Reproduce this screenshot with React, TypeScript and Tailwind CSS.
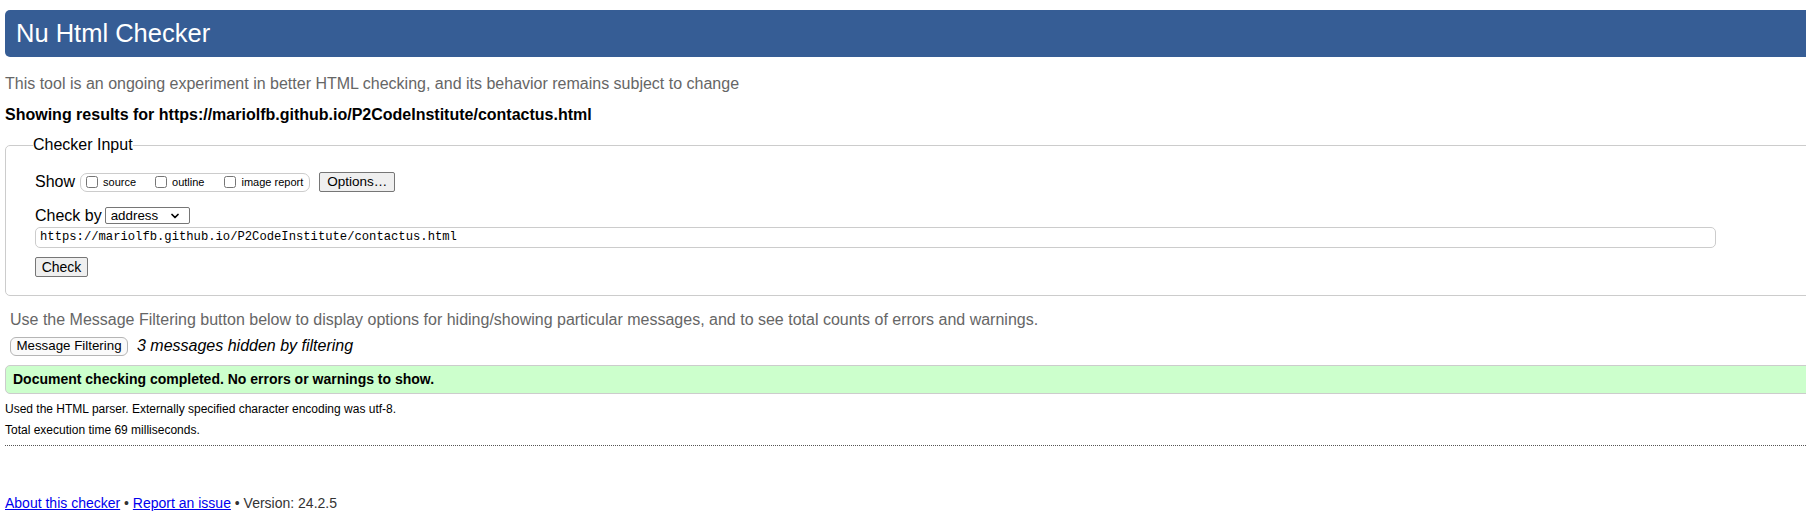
import { ChevronDown } from "lucide-react";

const urlValue = "https://mariolfb.github.io/P2CodeInstitute/contactus.html";

function ShowOptions() {
  const boxes = [
    { id: "source", label: "source", gap: "mr-[19px]" },
    { id: "outline", label: "outline", gap: "mr-[20px]" },
    { id: "image", label: "image report", gap: "mr-[6px]" },
  ];

  return (
    <div className="ml-[5px] flex h-[19px] items-center rounded-[7px] border border-[#cccccc] pl-[5px]">
      {boxes.map((box) => (
        <label key={box.id} className={`flex items-center ${box.gap}`}>
          <input type="checkbox" className="m-0 h-[12px] w-[12px]" />
          <span className="ml-[5px] text-[11px] leading-none text-black">{box.label}</span>
        </label>
      ))}
    </div>
  );
}

function App() {
  return (
    <div className="h-[518px] w-[1806px] overflow-hidden bg-white font-['Liberation_Sans',Arial,sans-serif] text-black">
      <div className="w-[1830px] pl-[5px] pt-[10px]">
        {/* page title bar */}
        <div className="flex h-[47px] items-center rounded-[5px] bg-[#365d95] pl-[11px] text-[25.5px] text-white">
          Nu Html Checker
        </div>

        <p className="mt-[17px] text-[16px] leading-[20px] text-[#666666]">
          This tool is an ongoing experiment in better HTML checking, and its behavior remains subject to change
        </p>
        <p className="mt-[11px] text-[16px] font-bold leading-[20px]">
          Showing results for {urlValue}
        </p>

        <fieldset className="mt-[10px] rounded-l-[5px] border border-[#cccccc] pb-[16px] pl-[29px]">
          <legend className="ml-[-2px] px-0 text-[16px] leading-[20px]">Checker Input</legend>

          <div className="mt-[17px] flex h-[20px] items-center">
            <span className="text-[16px] leading-none">Show</span>
            <ShowOptions />
            <button className="ml-[9px] h-[20px] w-[76px] rounded-[2px] border border-[#767676] bg-[#efefef] text-[13.5px] leading-none">
              Options…
            </button>
          </div>

          <div className="mt-[14px] flex h-[19px] items-center">
            <span className="text-[16px] leading-none">Check by</span>
            <div className="ml-[3px] flex h-[17px] w-[85px] items-center justify-between rounded-[2px] border border-[#767676] bg-white pl-[5px] pr-[8px]">
              <span className="text-[13.33px] leading-none">address</span>
              <ChevronDown size={12} strokeWidth={3.5} />
            </div>
          </div>

          <div className="mt-[2px] flex h-[21px] w-[1681px] items-center rounded-[5px] border border-[#cccccc] pl-[4px] font-['Liberation_Mono',monospace] text-[12.2px]">
            {urlValue}
          </div>

          <button className="mt-[9px] h-[20px] w-[53px] rounded-[2px] border border-[#767676] bg-[#efefef] text-[14px] leading-none">
            Check
          </button>
        </fieldset>

        <p className="ml-[5px] mt-[14px] text-[16px] leading-[20px] text-[#666666]">
          Use the Message Filtering button below to display options for hiding/showing particular messages, and to see total counts of errors and warnings.
        </p>

        <div className="ml-[5px] mt-[6px] flex h-[20px] items-center">
          <button className="h-[19px] w-[118px] rounded-[6px] border border-[#b5b5b5] bg-[#fafafa] text-[13.33px] leading-none">
            Message Filtering
          </button>
          <span className="ml-[9px] text-[16px] italic leading-none">3 messages hidden by filtering</span>
        </div>

        <div className="mt-[9px] flex h-[29px] items-center rounded-l-[5px] border border-[#cccccc] bg-[#ccffcc] pl-[7px] text-[14px] font-bold">
          Document checking completed. No errors or warnings to show.
        </div>

        <p className="mt-[7px] text-[12px] leading-[16px]">
          Used the HTML parser. Externally specified character encoding was utf-8.
        </p>
        <p className="mt-[5px] text-[12px] leading-[16px]">Total execution time 69 milliseconds.</p>

        <div className="mt-[7px] border-t border-dotted border-[#555555]" />

        <p className="mt-[47px] text-[14px] leading-[20px] text-[#333333]">
          <a href="#about" className="text-[#0000ee] underline">
            About this checker
          </a>{" "}
          •{" "}
          <a href="#report" className="text-[#0000ee] underline">
            Report an issue
          </a>{" "}
          • Version: 24.2.5
        </p>
      </div>
    </div>
  );
}

export default App;
